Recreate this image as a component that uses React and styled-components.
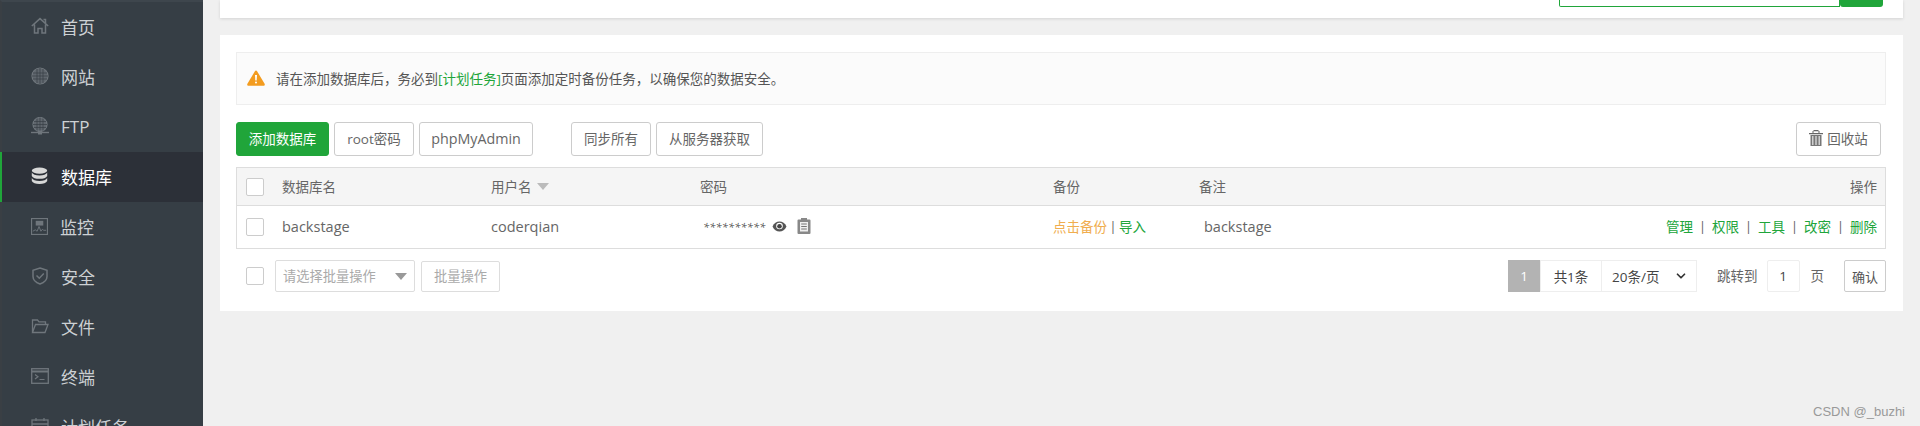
import React from "react";
import styled, { createGlobalStyle } from "styled-components";
import { ChevronDown } from "lucide-react";

const GlobalStyle = createGlobalStyle`
  html, body {
    margin: 0;
    height: 426px;
    overflow: hidden;
    background: #f0f0f0;
    font-family: "Open Sans", "Noto Sans CJK SC", sans-serif;
    color: #666;
  }
  * { box-sizing: border-box; }
`;

const Page = styled.div`
  position: relative;
  display: flex;
  height: 426px;
  overflow: hidden;
`;

const Sidebar = styled.nav`
  width: 203px;
  flex: none;
  padding-top: 2px;
  background: #363e45;
  border-top: 2px solid #3e464d;
  border-left: 2px solid #3a3f44;
`;

const NavItem = styled.a`
  display: flex;
  align-items: center;
  gap: 12px;
  height: 50px;
  margin-top: ${(p) => (p.$first ? "-2px" : "0")};
  margin-left: -2px;
  padding-left: 31px;
  padding-bottom: 2px;
  font-size: 17px;
  color: ${(p) => (p.$active ? "#fff" : "#cdd1d4")};
  background: ${(p) => (p.$active ? "#2c3038" : "transparent")};
  border-left: ${(p) => (p.$active ? "2px solid #20a53a" : "none")};
  svg {
    flex: none;
    margin-left: ${(p) => (p.$active ? "-2px" : "0")};
    color: ${(p) => (p.$active ? "#d8d8d8" : "#6f767c")};
  }
`;

const Main = styled.main`
  flex: 1;
  padding: 0 17px;
`;

const TopPanel = styled.div`
  display: flex;
  justify-content: flex-end;
  height: 18px;
  padding-right: 20px;
  background: #fff;
  box-shadow: 0 1px 3px rgba(0, 0, 0, 0.12);
`;

const SearchBox = styled.div`
  display: flex;
  height: 7px;
`;

const SearchInput = styled.div`
  width: 281px;
  border: 1px solid #20a53a;
  border-top: none;
  border-radius: 0 0 0 2px;
  background: #fff;
`;

const SearchButton = styled.div`
  width: 43px;
  background: #20a53a;
  border-radius: 0 0 3px 3px;
`;

const Panel = styled.section`
  margin-top: 17px;
  height: 276px;
  padding: 17px 17px 0 16px;
  background: #fff;
`;

const Alert = styled.div`
  display: flex;
  align-items: center;
  gap: 11px;
  height: 53px;
  padding-left: 10px;
  padding-bottom: 2px;
  font-size: 13.5px;
  color: #555;
  background: #fbfbfb;
  border: 1px solid #eee;
  svg { flex: none; }
`;

const AlertLink = styled.span`
  color: #20a53a;
`;

const Toolbar = styled.div`
  display: flex;
  align-items: center;
  justify-content: space-between;
  margin-top: 17px;
`;

const ToolbarLeft = styled.div`
  display: flex;
`;

const ButtonGroup = styled.div`
  display: flex;
  gap: 5px;
  margin-left: ${(p) => p.$offset || 0}px;
`;

const Button = styled.button`
  display: flex;
  align-items: center;
  justify-content: center;
  gap: 4px;
  width: ${(p) => p.$width}px;
  height: 34px;
  padding: 0 0 2px;
  font-family: inherit;
  font-size: ${(p) => (p.$latin ? "14.3px" : "13.5px")};
  color: ${(p) => (p.$primary ? "#fff" : "#666")};
  background: ${(p) => (p.$primary ? "#20a53a" : "#fff")};
  border: 1px solid ${(p) => (p.$primary ? "#20a53a" : "#ccc")};
  border-radius: 3px;
`;

const RecycleButton = styled(Button)`
  margin-right: 5px;
`;

const Table = styled.div`
  margin-top: 11px;
  border: 1px solid #ddd;
  font-size: 13.5px;
  color: #666;
`;

const CheckCell = styled.div`
  padding-left: 9px;
`;

const Row = styled.div`
  display: grid;
  grid-template-columns: 45px 209px 209px 353px 146px 1fr auto;
  align-items: center;
  height: ${(p) => (p.$head ? 38 : 42)}px;
  background: ${(p) => (p.$head ? "#f5f5f5" : "#fff")};
  border-bottom: ${(p) => (p.$head ? "1px solid #ddd" : "none")};
  padding-right: 8px;
  > :not(${CheckCell}) {
    padding-bottom: 2px;
  }
`;

const LatinCell = styled.div`
  font-size: 14.5px;
  padding-left: ${(p) => p.$indent || 0}px;
`;

const Check = styled.span`
  display: block;
  width: 18px;
  height: 18px;
  background: #fff;
  border: 1px solid #ccc;
  border-radius: 2px;
`;

const SortHead = styled.div`
  display: flex;
  align-items: center;
  gap: 5px;
`;

const SortArrow = styled.span`
  width: 0;
  height: 0;
  margin-top: 2px;
  border-left: 6px solid transparent;
  border-right: 6px solid transparent;
  border-top: 7px solid #bbb;
`;

const PasswordCell = styled.div`
  display: flex;
  align-items: center;
  padding-left: 3px;
  svg { flex: none; }
`;

const Masked = styled.span`
  width: 69px;
  font-size: 11px;
  font-style: italic;
  letter-spacing: 0.2px;
  color: #555;
`;

const CopyWrap = styled.span`
  display: flex;
  margin-left: 10px;
`;

const BackupCell = styled.div`
  display: flex;
  align-items: center;
`;

const BackupLink = styled.span`
  color: #f0ad4e;
`;

const GreenLink = styled.span`
  color: #20a53a;
`;

const Actions = styled.div`
  display: flex;
  align-items: center;
`;

const Sep = styled.span`
  width: ${(p) => p.$width}px;
  text-align: center;
  color: #666;
`;

const Footer = styled.div`
  display: flex;
  align-items: center;
  justify-content: space-between;
  margin-top: 11px;
  height: 32px;
`;

const BatchArea = styled.div`
  display: flex;
  align-items: center;
  padding-left: 10px;
`;

const BatchSelect = styled.div`
  display: flex;
  align-items: center;
  justify-content: space-between;
  width: 140px;
  height: 32px;
  margin-left: 11px;
  padding: 0 7px 1px;
  font-size: 13.25px;
  color: #aaa;
  border: 1px solid #ddd;
  border-radius: 2px;
`;

const BatchArrow = styled(SortArrow)`
  border-top-color: #999;
`;

const BatchButton = styled.div`
  display: flex;
  align-items: center;
  justify-content: center;
  width: 79px;
  height: 31px;
  margin-left: 6px;
  padding-bottom: 1px;
  font-size: 13.25px;
  color: #aaa;
  border: 1px solid #ddd;
  border-radius: 2px;
`;

const Pager = styled.div`
  display: flex;
  align-items: center;
  font-size: 13.5px;
  color: #555;
`;

const PageCurrent = styled.span`
  display: flex;
  align-items: center;
  justify-content: center;
  width: 32px;
  height: 32px;
  color: #fff;
  background: #b3b3b3;
`;

const PageCell = styled.span`
  display: flex;
  align-items: center;
  justify-content: ${(p) => (p.$spread ? "space-between" : "center")};
  width: ${(p) => p.$width}px;
  height: 32px;
  padding: ${(p) => (p.$spread ? "0 8px 0 10px" : "0")};
  margin-left: ${(p) => (p.$first ? 0 : -1)}px;
  border: 1px solid #eee;
  color: #444;
  svg { color: #333; }
`;

const JumpLabel = styled.span`
  margin: 0 ${(p) => p.$right}px 2px ${(p) => p.$left}px;
  color: #666;
`;

const JumpInput = styled.span`
  display: flex;
  align-items: center;
  justify-content: center;
  width: 33px;
  height: 32px;
  border: 1px solid #eee;
  border-radius: 2px;
  color: #444;
`;

const ConfirmButton = styled.span`
  display: flex;
  align-items: center;
  justify-content: center;
  width: 42px;
  height: 32px;
  font-size: 13px;
  border: 1px solid #ccc;
  border-radius: 2px;
`;

const Watermark = styled.div`
  position: absolute;
  right: 15px;
  top: 404px;
  font-family: "Liberation Sans", sans-serif;
  font-size: 13px;
  color: #999;
`;

const Icon = ({ children, size = 18 }) => (
  <svg width={size} height={size} viewBox="0 0 18 18" fill="none" stroke="currentColor" strokeWidth="1.2">
    {children}
  </svg>
);

const HomeIcon = () => (
  <Icon>
    <path d="M.8 9L9 1.6 17.2 9M3.5 7.5V16H7v-4.5h4V16h3.5V7.5M12.5 2.5h2V6" strokeWidth="1.5" />
  </Icon>
);

const GlobeLines = ({ cy, r }) => (
  <>
    <circle cx="9" cy={cy} r={r} fill="currentColor" fillOpacity="0.75" />
    <path
      d={`M${9 - r} ${cy}h${2 * r}M${9 - r + 1} ${cy - 3}h${2 * r - 2}M${9 - r + 1} ${cy + 3}h${2 * r - 2}M9 ${cy - r}v${2 * r}M6 ${cy - r + 1}v${2 * r - 2}M12 ${cy - r + 1}v${2 * r - 2}`}
      stroke="#363e45"
      strokeWidth="0.7"
    />
  </>
);

const GlobeIcon = () => (
  <Icon>
    <GlobeLines cy={9} r={8} />
  </Icon>
);

const FtpIcon = () => (
  <Icon>
    <GlobeLines cy={7.5} r={7} />
    <path d="M0 15.5h18" strokeWidth="1.4" />
    <rect x="7" y="13.5" width="4" height="4" fill="currentColor" stroke="none" />
  </Icon>
);

const DatabaseIcon = () => (
  <Icon>
    <g fill="currentColor" stroke="none">
      <ellipse cx="8.5" cy="3.6" rx="7.7" ry="3.1" />
      <path d="M.8 5.6c1 2 3.8 2.9 7.7 2.9s6.700-.9 7.700-2.900v3.300c-1 2-3.800 2.900-7.700 2.900S1.800 10.900.8 8.900z" />
      <path d="M.8 11c1 2 3.800 2.900 7.700 2.900s6.700-.9 7.700-2.900v3c-1 2-3.800 3-7.700 3S1.800 16 .8 14z" />
    </g>
  </Icon>
);

const MonitorIcon = () => (
  <Icon size={17}>
    <rect x="0.6" y="0.6" width="16.800" height="16.800" />
    <rect x="5" y="3" width="8" height="5" fill="currentColor" stroke="none" />
    <path d="M2 14l2.500-1.500 2 1.500 2-5 2 5 1.500-2 1.500 1h2.500" strokeWidth="1" />
  </Icon>
);

const ShieldIcon = () => (
  <Icon>
    <path d="M9 1l7 2.200v6.300c0 3.500-3 6-7 7.500-4-1.500-7-4-7-7.500V3.200z" strokeWidth="1.500" />
    <path d="M5.500 8.500L8.300 11.200 12.800 6.500" strokeWidth="1.500" />
  </Icon>
);

const FolderIcon = () => (
  <Icon>
    <path d="M1.500 15.500V3h5l1.500 1.800h6.500V7.500M1.500 15.500h12.500l3-8H4.500z" strokeWidth="1.300" />
  </Icon>
);

const TerminalIcon = () => (
  <Icon>
    <rect x="0.700" y="1.700" width="16.600" height="14.600" strokeWidth="1.300" />
    <path d="M1 4.500h16" strokeWidth="2" />
    <path d="M4 7.500l3 2.300-3 2.300M8.500 12.500h5" strokeWidth="1.200" />
  </Icon>
);

const CalendarIcon = () => (
  <Icon>
    <rect x="1" y="3" width="16" height="14" strokeWidth="1.300" />
    <path d="M1 7h16M5 1v3M13 1v3" strokeWidth="1.300" />
  </Icon>
);

const AlertIcon = () => (
  <svg width="18" height="16" viewBox="0 0 18 16">
    <path d="M9 0.500a1.300 1.300 0 0 1 1.100.7l7.500 12.600c.5.900 0 2-1.100 2H1.500c-1.100 0-1.600-1.100-1.100-2L7.900 1.200A1.300 1.300 0 0 1 9 .5z" fill="#f39c1f" />
    <path d="M8 5h2l-.3 5.500H8.300z" fill="#fff" />
    <circle cx="9" cy="12.500" r="1" fill="#fff" />
  </svg>
);

const EyeIcon = () => (
  <svg width="15" height="11" viewBox="0 0 15 11">
    <path d="M.5 5.500C2 2.200 4.500.5 7.500.5s5.500 1.700 7 5c-1.500 3.300-4 5-7 5s-5.500-1.700-7-5z" fill="#555" />
    <circle cx="7.500" cy="5" r="3.300" fill="#fff" />
    <circle cx="7.500" cy="5.300" r="2.300" fill="#444" />
  </svg>
);

const CopyIcon = () => (
  <svg width="14" height="16" viewBox="0 0 14 16">
    <path d="M4 0h6v1.500h2.500a1 1 0 0 1 1 1V15a1 1 0 0 1-1 1h-11a1 1 0 0 1-1-1V2.500a1 1 0 0 1 1-1H4z" fill="#888" />
    <rect x="3" y="4" width="8" height="9.500" fill="#eee" />
    <path d="M4.200 6h5.600M4.200 8.500h5.600M4.200 11h5.600" stroke="#777" strokeWidth="1" />
  </svg>
);

const TrashIcon = () => (
  <svg width="14" height="16" viewBox="0 0 14 16">
    <path d="M0 3h14v1.200H0zM4.500 0h5v1h1v2h-1V1.200h-5V3h-1V1h1z" fill="#666" />
    <path d="M1.500 5h11v11h-11z" fill="#777" />
    <path d="M3.800 6v9M7 6v9M10.200 6v9" stroke="#e5e5e5" strokeWidth="1.200" />
  </svg>
);

const navItems = [
  { label: "首页", icon: <HomeIcon /> },
  { label: "网站", icon: <GlobeIcon /> },
  { label: "FTP", icon: <FtpIcon /> },
  { label: "数据库", icon: <DatabaseIcon />, active: true },
  { label: "监控", icon: <MonitorIcon /> },
  { label: "安全", icon: <ShieldIcon /> },
  { label: "文件", icon: <FolderIcon /> },
  { label: "终端", icon: <TerminalIcon /> },
  { label: "计划任务", icon: <CalendarIcon /> },
];

const actions = ["管理", "权限", "工具", "改密", "删除"];

export default function App() {
  return (
    <Page>
      <GlobalStyle />
      <Sidebar>
        {navItems.map((item, i) => (
          <NavItem key={item.label} $first={i === 0} $active={item.active}>
            {item.icon}
            {item.label}
          </NavItem>
        ))}
      </Sidebar>
      <Main>
        <TopPanel>
          <SearchBox>
            <SearchInput />
            <SearchButton />
          </SearchBox>
        </TopPanel>
        <Panel>
          <Alert>
            <AlertIcon />
            <span>
              请在添加数据库后，务必到<AlertLink>[计划任务]</AlertLink>页面添加定时备份任务，以确保您的数据安全。
            </span>
          </Alert>
          <Toolbar>
            <ToolbarLeft>
              <ButtonGroup>
                <Button $primary $width={93}>添加数据库</Button>
                <Button $width={80}>root密码</Button>
                <Button $width={114} $latin>phpMyAdmin</Button>
              </ButtonGroup>
              <ButtonGroup $offset={38}>
                <Button $width={80}>同步所有</Button>
                <Button $width={107}>从服务器获取</Button>
              </ButtonGroup>
            </ToolbarLeft>
            <RecycleButton $width={85}>
              <TrashIcon />
              回收站
            </RecycleButton>
          </Toolbar>
          <Table>
            <Row $head>
              <CheckCell><Check /></CheckCell>
              <div>数据库名</div>
              <SortHead>用户名<SortArrow /></SortHead>
              <div>密码</div>
              <div>备份</div>
              <div>备注</div>
              <div>操作</div>
            </Row>
            <Row>
              <CheckCell><Check /></CheckCell>
              <LatinCell>backstage</LatinCell>
              <LatinCell>coderqian</LatinCell>
              <PasswordCell>
                <Masked>**********</Masked>
                <EyeIcon />
                <CopyWrap><CopyIcon /></CopyWrap>
              </PasswordCell>
              <BackupCell>
                <BackupLink>点击备份</BackupLink>
                <Sep $width={12}>|</Sep>
                <GreenLink>导入</GreenLink>
              </BackupCell>
              <LatinCell $indent={5}>backstage</LatinCell>
              <Actions>
                {actions.map((a, i) => (
                  <React.Fragment key={a}>
                    {i > 0 && <Sep $width={19}>|</Sep>}
                    <GreenLink>{a}</GreenLink>
                  </React.Fragment>
                ))}
              </Actions>
            </Row>
          </Table>
          <Footer>
            <BatchArea>
              <Check />
              <BatchSelect>
                请选择批量操作
                <BatchArrow />
              </BatchSelect>
              <BatchButton>批量操作</BatchButton>
            </BatchArea>
            <Pager>
              <PageCurrent>1</PageCurrent>
              <PageCell $width={62} $first>共1条</PageCell>
              <PageCell $width={96} $spread>
                20条/页
                <ChevronDown size={14} strokeWidth={3} />
              </PageCell>
              <JumpLabel $left={20} $right={9}>跳转到</JumpLabel>
              <JumpInput>1</JumpInput>
              <JumpLabel $left={11} $right={20}>页</JumpLabel>
              <ConfirmButton>确认</ConfirmButton>
            </Pager>
          </Footer>
        </Panel>
      </Main>
      <Watermark>CSDN @_buzhi</Watermark>
    </Page>
  );
}
